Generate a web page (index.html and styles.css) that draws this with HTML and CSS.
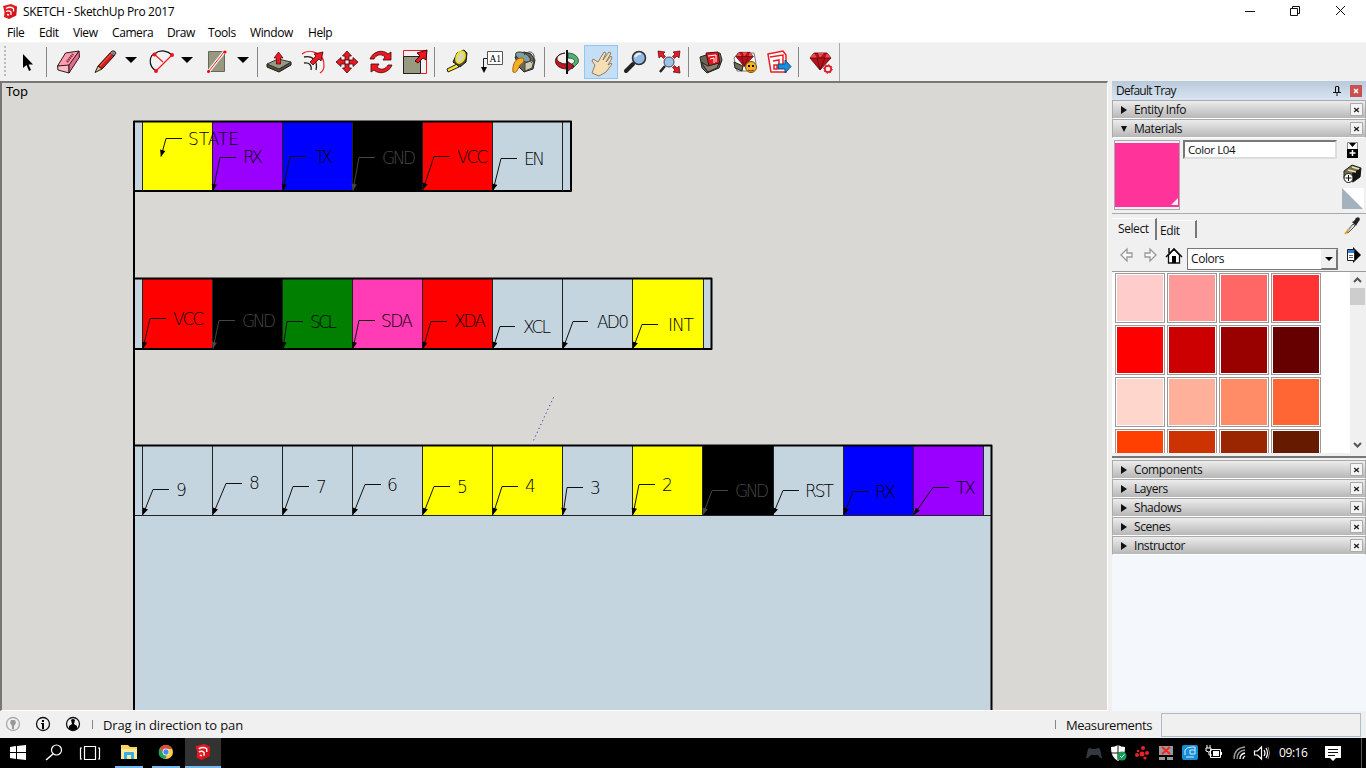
FILE: index.html
```html
<!DOCTYPE html>
<html lang="en">
<head>
<meta charset="utf-8">
<title>SKETCH - SketchUp Pro 2017</title>
<link rel="stylesheet" href="styles.css">
</head>
<body>
<svg class="defs" width="0" height="0">
  <defs>
    <symbol id="logo" viewBox="0 0 14 15"><path fill="#e3191f" d="M0 2 8 0l6 2.500-.8 9L6 15l-5-2 .5-5z"/><path fill="#b80f16" d="m6 15 7.200-3.500.8-9L8.500 5z" opacity=".4"/><path fill="none" stroke="#fff" stroke-width="1.300" d="M3 4.500q4-2.500 7.500 0v3M3 7.500q3-1.500 5 .5v3M4 10.500l2 .5"/></symbol>
    <symbol id="close" viewBox="0 0 13 13"><path fill="#f4f4f4" stroke="#aaa" d="M.5.5h12v12H.5z"/><path stroke="#222" stroke-width="1.300" d="m4.200 5 4.600 4M8.800 5 4.200 9"/></symbol>
    <symbol id="ruby" viewBox="0 0 24 24"><path fill="#b5121b" stroke="#4c0508" stroke-width=".8" d="M1 9 5 4h13l4 5-11 12z"/><path fill="#ef4b50" d="m5 4 3 5H1zM9 4h6l-4 5zM18 4l4 5h-6z"/><path stroke="#61070b" stroke-width=".8" fill="none" d="M1 9h21M8 9l3 12 5-12"/></symbol>
    <marker id="tip" viewBox="0 0 10 8" refX="9.500" refY="4" markerWidth="8" markerHeight="5.500" markerUnits="userSpaceOnUse" orient="auto"><path class="head" d="m0 0 10 4-10 4z"/></marker>
    <marker id="tip-gray" viewBox="0 0 10 8" refX="9.500" refY="4" markerWidth="8" markerHeight="5.500" markerUnits="userSpaceOnUse" orient="auto"><path class="head-gray" d="m0 0 10 4-10 4z"/></marker>
  </defs>
</svg>
<div class="app">
  <header class="titlebar">
    <svg class="app-logo"><use href="#logo"/></svg>
    <span class="title">SKETCH - SketchUp Pro 2017</span>
    <svg class="window-controls" viewBox="0 0 110 22"><path fill="none" stroke="#111" d="M1 10.500h10M46.500 7.500h7v7h-7zM48.500 7V5.500h7v7H54M92 5l9 9m0-9-9 9"/></svg>
  </header>
  <nav class="menubar"><span>File</span><span>Edit</span><span>View</span><span>Camera</span><span>Draw</span><span>Tools</span><span>Window</span><span>Help</span></nav>
  <div class="toolbar">
    <div class="tools">
      <i class="grip"></i>
      <svg class="tool" viewBox="0 0 34 34"><path d="M13 9v14l3.500-3 2.500 6 2-1-2.500-5.500h4.500z"/></svg>
      <i class="sep tight"></i>
      <svg class="tool" viewBox="0 0 34 34"><g stroke="#2c1b1e" stroke-linejoin="round"><path fill="#ff9db3" d="m6.500 21 8-13L28 6 18 22z"/><path fill="#ffb9c8" d="M6.500 21 18 20v8l-11-3z"/><path fill="#e56b88" d="M18 20 28 6l.5 6L18 28z"/></g><path stroke="#7c3545" stroke-width="2.500" stroke-dasharray="1.500 .7" d="m16 17 6-8"/></svg>
      <svg class="tool gap-s" viewBox="0 0 34 34"><path fill="#d51b1b" stroke="#2b0c0c" d="m10 21 13-14 4 3-13 14z"/><path fill="#e0bd73" stroke="#222" d="m10 21 4 3-7 3.500z"/><path fill="#888" stroke="#333" d="m22 8 2-2q3-1 4 2l-2 3z"/><path stroke="#ff6760" d="M12 21 24 8"/></svg>
      <svg class="drop" viewBox="0 0 22 34"><path d="M3 12h12l-6 6z"/></svg>
      <svg class="tool" viewBox="0 0 34 34"><path fill="none" stroke="#111" stroke-width="1.200" d="M12 26C3 20 6 10 11 8.500 17 4 24 6 28 10"/><path fill="none" stroke="#ed1b24" stroke-width="1.200" d="m10 9 9 8m9-7L12 26"/><g fill="#f1121c"><circle cx="10.500" cy="9.500" r="2"/><circle cx="28" cy="10" r="2"/><circle cx="12" cy="26" r="2"/></g></svg>
      <svg class="drop" viewBox="0 0 22 34"><path d="M3 12h12l-6 6z"/></svg>
      <svg class="tool" viewBox="0 0 34 34"><path fill="#999982" stroke="#66665a" d="M8.500 6.500h16v20h-16z"/><path stroke="#fff" stroke-width="3" d="M9 26 24 7"/><path stroke="#ed1b24" d="M9 26 24 7"/><circle cx="8.500" cy="26.500" r="1.500" fill="red"/><circle cx="25" cy="7" r="1.500" fill="red"/></svg>
      <svg class="drop last" viewBox="0 0 22 34"><path d="M3 12h12l-6 6z"/></svg>
      <i class="sep tight"></i>
      <svg class="tool" viewBox="0 0 34 34"><path fill="#53533f" stroke="#181813" d="m5 19 13 5 11-7v3l-12 7-12-5z"/><path fill="#999982" stroke="#333" d="m5 19 11-5 13 3-12 7z"/><path fill="#f01820" stroke="#3c080a" stroke-width=".7" d="M14.500 19v-6H12l4.500-6 4.500 6h-2.500v6z"/></svg>
      <svg class="tool" viewBox="0 0 34 34"><path fill="none" stroke="#f01820" stroke-width="1.200" d="M6 9c7-6 23-1 22 12 0 3-1 5-4 7"/><path fill="none" stroke="#222" stroke-width="1.300" d="M8 12c9-2 14 4 12 13M8 18c5-1 8 2 7 7"/><path fill="#f01820" stroke="#3c080a" stroke-width=".8" d="m14 17 6-6-2-2 9-2-2 9-2-2-6 6z"/></svg>
      <svg class="tool" viewBox="0 0 34 34"><g fill="#f01820" stroke="#3c080a" stroke-width=".8"><path d="m17 6 4.500 5H19v4h-4v-4h-2.500zM17 28l4.500-5H19v-4h-4v4h-2.500zM6 17l5-4.500V15h4v4h-4v2.500zM28 17l-5-4.500V15h-4v4h4v2.500z"/></g></svg>
      <svg class="tool" viewBox="0 0 34 34"><g fill="#f01820" stroke="#3c080a" stroke-width=".8"><path d="M6 14c3-8 13-10 18-5l3-2v8h-8l2-3c-4-4-9-2-11 2z"/><path d="M28 20c-3 8-13 10-18 5l-3 2v-8h8l-2 3c4 4 9 2 11-2z"/></g></svg>
      <svg class="tool" viewBox="0 0 34 34"><path fill="none" stroke="#f01820" d="M5.500 5.500h23v23h-23z"/><path fill="#999982" stroke="#222" d="M5.500 11.500h17v17h-17z"/><path fill="#f01820" stroke="#3c080a" d="m17 16 5-5-3-3 10-3-1 10-3-2-5 5z"/></svg>
      <i class="sep"></i>
      <svg class="tool" viewBox="0 0 34 34"><path fill="#f7e720" stroke="#222" d="m7 24 10-5 2 3-11 5z"/><path fill="#4b4b36" stroke="#181818" d="m13 17 4-9 7-3 3 3-1 9-6 5z"/><ellipse cx="20.500" cy="12" rx="4" ry="6" transform="rotate(25 20 12)" fill="#d7d7be" stroke="#f1db22" stroke-width="2"/></svg>
      <svg class="tool" viewBox="0 0 34 34"><path fill="#fff" stroke="#555" d="M13.500 6.500h15v13h-15z"/><path fill="none" stroke="#222" d="M13 13.500H9.500V23"/><path d="M7 22h6l-3 6z"/><text class="icon-label" x="15.500" y="16.500">A1</text></svg>
      <svg class="tool nudge" viewBox="0 0 34 34"><path fill="#686856" stroke="#252520" d="m8 12 9-5 7 2 4 6-2 9-9 3-5-5z"/><ellipse cx="16" cy="12" rx="8" ry="4" transform="rotate(25 16 12)" fill="#7fa0a5" stroke="#333"/><path fill="#cfcbb5" stroke="#484637" d="m18 18 9-3-2 8-7 3z"/><path fill="#faae28" stroke="#9e6510" d="M16 13C9 12 5 19 6 27c4 2 5-4 7-7 3-2 5-4 3-7z"/><path fill="none" stroke="#444" d="M17 10c8-8 14 2 7 8"/></svg>
      <i class="sep"></i>
      <svg class="tool" viewBox="0 0 34 34"><path fill="#55ae72" stroke="#164928" stroke-width=".8" d="M18 8c7 0 12 5 10 10l-6 6-4-3 4-2c5-3 2-6-4-6z"/><path fill="#bc1724" stroke="#3c080a" stroke-width=".8" d="M15 8c-8 1-10 6-6 9q3 2 8 2v-3l7 5-7 6v-3C3 24 1 10 15 8z"/><path stroke="#111" stroke-width="2" d="M17 5v24"/></svg>
      <svg class="tool active" viewBox="0 0 34 34"><path fill="#f6deb4" stroke="#75674e" stroke-width=".8" d="m8 28 3-8-3-4 1-2 5 3 6-10 2 1-3 7 6-8 2 1-5 9 5-6 1 2-4 7 3-2 1 1-6 8-7 4z"/></svg>
      <svg class="tool" viewBox="0 0 34 34"><path stroke="#222" stroke-width="4" stroke-linecap="round" d="m8 26 7-7"/><circle cx="21" cy="13" r="6.500" fill="#93b9e5" stroke="#333" stroke-width="1.600"/><path fill="none" stroke="#e4f2ff" stroke-width="2" d="M17 12q2-4 6-3"/></svg>
      <svg class="tool" viewBox="0 0 34 34"><path stroke="#222" stroke-width="2.500" d="m8 27 5-6"/><circle cx="17" cy="17" r="5" fill="#9bc4e9" stroke="#445"/><g fill="#f01820" stroke="#3c080a" stroke-width=".7"><path d="m6 6 7 1-2 2 2.500 2.500-2 2L9 11l-2 2zM28 6l-7 1 2 2-2.500 2.500 2 2L25 11l2 2zM28 28l-7-1 2-2-2.500-2.500 2-2L25 23l2-2z"/></g></svg>
      <i class="sep"></i>
      <svg class="tool" viewBox="0 0 34 34"><path fill="#6b6656" stroke="#26231e" d="m6 12 6-2 14-2 2 7-3 8-12 5-5-5z"/><path fill="#e21820" stroke="#470c0e" d="m12 8 12-1 2 12-11 2z"/><path fill="none" stroke="#fff" d="m14 11 8-1v7M16 14l4-1v5"/><path fill="#89816d" stroke="#222" d="m7 17 7 4 11-3-2 5-9 4z"/></svg>
      <svg class="tool" viewBox="0 0 34 34"><path fill="#fff" stroke="#777" d="m6 13 4-5h16l2 10-5 8H9z"/><use href="#ruby" x="7" y="4" width="20" height="20"/><path fill="#736b57" stroke="#222" d="m6 17 9 4-1 5-7-3z"/><circle cx="23" cy="22" r="5.500" fill="#f6b323" stroke="#754c0c"/><path d="M20 20h2v2h-2zM24 20h2v2h-2z"/><path stroke="#7a3e00" fill="none" d="M20 25q3 2 6 0"/></svg>
      <svg class="tool" viewBox="0 0 34 34"><path fill="#fff" stroke="#ed1b24" stroke-width="1.500" d="m6 9 15-3 3 4v17H9z"/><path fill="none" stroke="#ed1b24" stroke-width="1.500" d="m8 12 13-2v12M11 16l6-1v9M12 20h3v4h-3z"/><path fill="#178de0" stroke="#174977" d="M16 19h7v-4l6 6.500-6 6.500v-4h-7z"/></svg>
      <i class="sep"></i>
      <svg class="tool" viewBox="0 0 34 34"><use href="#ruby" x="5" y="4" width="24" height="24"/><circle cx="24" cy="24" r="3.200" fill="#eee" stroke="#e01a25" stroke-width="1.700"/><circle cx="24" cy="24" r="4.300" fill="none" stroke="#e01a25" stroke-dasharray="1.500 1.800"/></svg>
    </div>
  </div>
  <main class="workspace">
    <svg class="viewport" viewBox="2 83 1105 627">
      <text class="view-name" x="6" y="96" textLength="22">Top</text>
      <g class="face"><path d="M134 121h437v70H134zM134 278h577v71H134zM134 445h857v270H134z"/></g>
      <g>
        <path fill="#ff0" d="M142 122h70v69h-70zM633 279h70v70h-70zM423 446h140v69H423zM633 446h70v69h-70z"/>
        <path fill="#90f" d="M212 122h70v69h-70zM913 446h70v69h-70z"/>
        <path fill="#00f" d="M282 122h70v69h-70zM843 446h70v69h-70z"/>
        <path fill="red" d="M423 122h70v69h-70zM142 279h70v70h-70zM423 279h70v70h-70z"/>
        <path fill="#007f00" d="M282 279h70v70h-70z"/><path fill="#ff3bb5" d="M352 279h71v70h-71z"/>
        <path d="M352 122h71v69h-71zM212 279h71v70h-71zM703 446h70v69h-70z"/>
      </g>
      <path class="edge" d="M142.500 121v70M212.500 121v70M282.500 121v70M352.500 121v70M422.500 121v70M492.500 121v70M562.500 121v70M142.500 278v70M212.500 278v70M282.500 278v70M352.500 278v70M422.500 278v70M492.500 278v70M562.500 278v70M632.500 278v70M703.500 278v70M142.500 445v70M212.500 445v70M282.500 445v70M352.500 445v70M422.500 445v70M492.500 445v70M562.500 445v70M632.500 445v70M702.500 445v70M773.500 445v70M843.500 445v70M913.500 445v70M983.500 445v70M134 515.500h857"/>
      <path class="outline" d="M134 715V121.500h437V191H134M134 278.500h577.500V349H134M134 445.500h857.500V715"/>
      <path class="guide" d="m553.500 397.500-21 45"/>
      <g class="leader">
        <path d="M182 138.500h-16l-5 18"/><path d="M236 157.500h-16l-7 33"/><path d="M306 156.500h-16l-7 34"/><path d="M450 156.500h-16l-11 33"/><path d="M517 158.500h-16l-8 32"/>
        <path d="M166 318.500h-16l-7 30"/><path d="M303 321.500h-16l-4 27"/><path d="M375 320.500h-16l-6 28"/><path d="M447 321.500h-16l-8 27"/><path d="M515 326.500h-15l-7 22"/><path d="M588 321.500h-15l-10 27"/><path d="M658 324.500h-16l-9 24"/>
        <path d="M169 489.500h-16l-10 25"/><path d="M242 483.500h-16l-13 31"/><path d="M309 486.500h-16l-10 28"/><path d="M381 484.500h-16l-12 30"/><path d="M450 486.500h-16l-11 28"/><path d="M518 486.500h-16l-9 28"/><path d="M583 487.500h-16l-4 27"/><path d="M655 484.500h-16l-6 30"/><path d="M799 490.500h-16l-10 24"/><path d="M869 491.500h-16l-9 23"/><path d="M949 487.500h-16l-19 27"/>
      </g>
      <g class="leader muted"><path d="M375 157.500h-16l-6 33"/><path d="M235 320.500h-16l-6 28"/><path d="M728 490.500h-16l-9 24"/></g>
      <g class="tag">
        <text x="188" y="145" textLength="51">STATE</text><text x="243" y="163" textLength="20">RX</text><text x="315" y="163" textLength="18">TX</text><text class="dim" x="382" y="164" textLength="34">GND</text><text x="457" y="163" textLength="31">VCC</text><text x="524" y="165" textLength="21">EN</text>
        <text x="173" y="325" textLength="31">VCC</text><text class="dim" x="242" y="327" textLength="34">GND</text><text x="310" y="328" textLength="27">SCL</text><text x="381" y="327" textLength="32">SDA</text><text x="454" y="327" textLength="32">XDA</text><text x="523" y="333" textLength="28">XCL</text><text x="597" y="328" textLength="32">AD0</text><text x="668" y="331" textLength="26">INT</text>
        <text x="176" y="496">9</text><text x="249" y="489">8</text><text x="316" y="493">7</text><text x="387" y="491">6</text><text x="457" y="493">5</text><text x="525" y="492">4</text><text x="590" y="494">3</text><text x="662" y="491">2</text><text class="dim" x="735" y="497" textLength="34">GND</text><text x="805" y="497" textLength="29">RST</text><text x="875" y="498" textLength="21">RX</text><text x="956" y="494" textLength="20">TX</text>
      </g>
    </svg>
    <aside class="tray">
      <div class="tray-title"><span>Default Tray</span><svg class="pin" viewBox="0 0 8 10"><path fill="none" stroke="#111" d="M2.500 1v5m0-5.500h3V6M0 6.500h8M4 7v3M5.800 1v5"/></svg><svg class="tray-close" viewBox="0 0 12 12"><path fill="#c9504e" d="M0 0h12v12H0z"/><path stroke="#fff" stroke-width="1.500" d="m4 4 4 4m0-4L4 8"/></svg></div>
      <div class="panel-head"><i class="right"></i><span>Entity Info</span><svg><use href="#close"/></svg></div>
      <div class="panel-head"><i class="down"></i><span>Materials</span><svg><use href="#close"/></svg></div>
      <section class="materials">
        <div class="current">
          <div class="preview"><div class="chip"><i></i></div></div>
          <div class="name">Color L04</div>
          <svg class="side-icons" viewBox="0 0 24 72"><path fill="#fff" stroke="#888" d="M7.500 2.500h10v7h-10z"/><path d="M9 3h7l-3.500 4zM7 9h11v9H7z"/><path stroke="#fff" stroke-width="1.500" d="M12.500 10v6M9.500 13h6"/><path stroke="#222" fill="#756f4f" d="m4 31 8-6 9 3-1 9-7 5-9-4z"/><path fill="#151510" d="m12 33 9-5-1 9-7 5z"/><path stroke="#ece2b2" stroke-width="1.500" d="m8 30 8 2m-4-5 7 2"/><circle cx="8.500" cy="38" r="4.500" fill="#fff" stroke="#111"/><path stroke="#111" d="M8.500 35v6M5.500 38h6"/><path fill="#fff" d="M2 48h22v22z"/><path fill="#a3b2bd" d="m2 48 21 21H2z"/></svg>
        </div>
        <div class="tabs"><b>Select</b><b class="back">Edit</b><svg viewBox="0 0 18 18"><path fill="#222" d="m8 5 2-1 2-3c3-2 5 1 3 3l-2 3-1 2z"/><path fill="#ddd" stroke="#555" d="m9 7 2 2-6 6-2 1 1-3z"/><path stroke="#e1a21b" stroke-width="2" d="m5 12-4 5"/></svg></div>
        <div class="nav">
          <svg class="nav-icons" viewBox="0 0 72 30"><g fill="#f8f8f8" stroke="#999" stroke-width="1.300"><path d="m9 15 6-6v4h5v4h-5v4zM44 15l-6-6v4h-5v4h5v4z"/></g><path fill="#fff" stroke="#111" stroke-width="1.300" d="M56.500 15v8h11v-8L62 9z"/><path stroke="#111" fill="none" stroke-width="1.500" d="m54 17 8-8 8 8M57 13V8"/><path d="M60 16h4v7h-4z"/></svg>
          <div class="select"><span>Colors</span><button><i></i></button></div>
          <svg class="details" viewBox="0 0 16 18"><path d="M7 1v16l8-8z"/><path fill="#fff" stroke="#222" d="M1.500 3.500h7v11h-7z"/><path fill="#2e7fe0" d="M2 4h6v3H2z"/><path stroke="#666" d="M3 9.500h4m-4 2h4"/></svg>
        </div>
        <div class="library">
          <div class="colors">
            <i class="c1"></i><i class="c2"></i><i class="c3"></i><i class="c4"></i>
            <i class="c5"></i><i class="c6"></i><i class="c7"></i><i class="c8"></i>
            <i class="c9"></i><i class="c10"></i><i class="c11"></i><i class="c12"></i>
            <i class="c13"></i><i class="c14"></i><i class="c15"></i><i class="c16"></i>
          </div>
          <svg class="scrollbar" viewBox="0 0 16 181"><path fill="#f0f0f0" d="M0 0h16v181H0z"/><path fill="#cdcdcd" d="M0 16h15v17H0z"/><path fill="none" stroke="#555" stroke-width="2" d="m4 10 3.500-3.500L11 10M4 171l3.500 3.500L11 171"/></svg>
        </div>
      </section>
      <div class="panel-head"><i class="right"></i><span class="wide">Components</span><svg><use href="#close"/></svg></div>
      <div class="panel-head"><i class="right"></i><span>Layers</span><svg><use href="#close"/></svg></div>
      <div class="panel-head"><i class="right"></i><span>Shadows</span><svg><use href="#close"/></svg></div>
      <div class="panel-head"><i class="right"></i><span>Scenes</span><svg><use href="#close"/></svg></div>
      <div class="panel-head"><i class="right"></i><span>Instructor</span><svg><use href="#close"/></svg></div>
      <div class="tray-rest"></div>
    </aside>
  </main>
  <footer class="status">
    <svg class="status-icons" viewBox="0 0 96 27"><g fill="none" stroke-width="1.300"><circle cx="13" cy="13" r="6.500" stroke="#aaa"/><circle cx="43" cy="13" r="6.500" stroke="#111"/><circle cx="73" cy="13" r="6.500" stroke="#111"/></g><path fill="#999" d="M11 9h4l1 3-2 3v3h-2v-3l-2-3z"/><path d="M42 9h2v2h-2zM41 12h3v6h-2v-5h-1zM69 18v-3l3-2-1-4q2-2 4 0l-1 4 3 2v3q-4 3-8 0z"/><path stroke="#888" d="M92.500 9v9"/></svg>
    <span class="hint">Drag in direction to pan</span>
    <i class="tick"></i><span class="measure">Measurements</span><div class="field"></div>
  </footer>
  <div class="taskbar">
    <svg class="start" viewBox="0 0 115 30"><path fill="#fff" d="m10 9 6-1v6h-6zM17 8l9-1v7h-9zM10 15h6v6l-6-1zM17 15h9v7l-9-1z"/><g fill="none" stroke="#fff" stroke-width="1.200"><circle cx="56.500" cy="12" r="5"/><path stroke-width="1.600" d="m53 16-7 6"/><path d="M84.500 8.500h11v13h-11zM82 10h-1.500v11H82M98 10h1.500v11H98"/></g></svg>
    <div class="task files"><svg viewBox="0 0 18 16"><path fill="#ffd45d" d="M1 1h7l2 2h7v12H1z"/><path fill="#ffe99b" d="M1 5h16v10H1z"/><path fill="#39aee4" d="M4 9q0-1 1-1h8q1 0 1 1v6h-3v-4H7v4H4z"/></svg></div>
    <div class="task chrome"><svg viewBox="0 0 16 16"><circle cx="8" cy="8" r="7" fill="#ffcd41"/><path fill="#de4a3b" d="M2 4C5-.5 12 0 14 5H8L5 9z"/><path fill="#22a25a" d="m2 4 4 7 3 .5L7 15C0 14-.5 8 2 4z"/><circle cx="8" cy="8" r="3.400" fill="#fff"/><circle cx="8" cy="8" r="2.700" fill="#4b87ed"/></svg></div>
    <div class="task current-task"><svg viewBox="0 0 14 15"><use href="#logo"/></svg></div>
    <svg class="system" viewBox="1080 0 190 30"><path fill="#343940" d="m1086 20 2-9q2-2 4 0h4q2-2 4 0l2 9q-2 1-4-3h-7q-3 4-5 3z"/><path fill="#fff" d="M1111 9q4 0 7-2 3 2 7 2c0 7-2 11-7 14-5-3-7-7-7-14z"/><path stroke="#111" d="M1118 7v15m-7-7h14"/><circle cx="1122" cy="18" r="4.500" fill="#169b59"/><path fill="none" stroke="#fff" d="m1120 18 1.500 1.500 3-3"/><g fill="#e5222b"><circle cx="1142" cy="16" r="2.500"/><circle cx="1137" cy="17" r="2"/><circle cx="1138" cy="13" r="1.300"/><circle cx="1143" cy="10" r="2"/><circle cx="1147" cy="15" r="2"/><circle cx="1145" cy="20" r="1.600"/></g><path fill="#999" d="M1159 8h14v9h-14zM1159 19h6v3h-6zM1167 19h6v3h-6z"/><path stroke="#f22" stroke-width="2" d="m1162 9 8 7m0-7-8 7"/><rect x="1182" y="7" width="16" height="15" rx="2" fill="#168dd5"/><path fill="none" stroke="#d4efff" d="M1185 17v-5q2-3 7-3h3v7h-5v-4h5M1186 19h8"/><path fill="none" stroke="#fff" d="M1210.500 11.500h10v8h-10zM1207 7v3m3-3v3m-4 0h5v3q-2 2-5 0zM1209 14v3h3"/><path fill="#fff" d="M1213 13h6v5h-6zM1221 14h1v3h-1z"/><g fill="none" stroke="#999" stroke-width="1.300"><path d="M1234 21q0-11 11-12M1237 21q0-8 8-9"/><path stroke="#fff" d="M1240 21q0-5 5-6M1243 21q0-2 2-3"/></g><path fill="none" stroke="#fff" stroke-width="1.200" d="M1254.500 13h3l4-4v12l-4-4h-3zM1264 12q2 3 0 6m2-8q3 5 0 10"/><path fill="none" stroke="#888" d="M1268 9q3 6 0 12"/></svg>
    <span class="clock">09:16</span>
    <svg class="notice" viewBox="0 0 16 17"><path fill="#fff" d="M0 1h16v12h-5l-3 3-3-3H0z"/><path stroke="#111" d="M3 4.500h10M3 7.500h10M3 10.500h7"/></svg>
    <i class="desktop-edge"></i>
  </div>
</div>
</body>
</html>
```
FILE: styles.css
```css
* { box-sizing: border-box; }
body { margin: 0; background: #f0f0f0; font: 12px/16px "Open Sans", sans-serif; color: #111; letter-spacing: -.42px; overflow: hidden; }
svg { display: block; flex: none; }
.defs { position: absolute; }
.app { width: 1366px; height: 768px; display: flex; flex-direction: column; }
.titlebar { height: 23px; background: #fff; display: flex; align-items: center; padding: 0 12px 0 3px; }
.app-logo { width: 14px; height: 15px; margin-right: 6px; }
.title { flex: 1; letter-spacing: -.33px; color: #000; }
.window-controls { width: 110px; height: 22px; }
.menubar { height: 19px; background: #fff; display: grid; grid-template-columns: 32px 34px 39px 55px 41px 42px 58px 60px; padding-left: 7px; line-height: 20px; color: #000; }
.toolbar { height: 39px; border-top: 1px solid #f5f5f5; }
.tools { width: 840px; height: 38px; display: flex; align-items: center; border-right: 1px solid #aaa; background: #f1f1f1; }
.grip { width: 2px; height: 32px; margin: 0 4px; background: repeating-linear-gradient(#bbb 0 2px, #f1f1f1 2px 4px); }
.tool { width: 34px; height: 34px; flex: none; }
.active { background: #c3def5; box-shadow: inset 0 0 0 1px #90c6f0; }
.gap-s { margin-left: 3px; }
.nudge { margin: 0 1px 0 -1px; }
.drop { width: 22px; height: 34px; }
.last { margin-right: -1px; }
.sep { width: 1px; height: 30px; margin: 0 5px 0 2px; background: #888; flex: none; }
.tight { margin-right: 4px; }
.icon-label { font: 9.500px "Liberation Serif", serif; letter-spacing: 0; }
.workspace { height: 630px; display: flex; gap: 4px; }
.viewport { width: 1108px; height: 630px; background: #d9d8d4; border: solid #777; border-width: 2px 0 0 2px; border-right: 1px solid #fff; border-bottom: 1px solid #fff; }
.view-name { font: 13px "Noto Sans", sans-serif; letter-spacing: 0; }
.face { fill: #c5d5e0; }
.edge { fill: none; stroke: #222; }
.outline { fill: none; stroke: #000; stroke-width: 2; stroke-linejoin: round; }
.guide { stroke: #1515a5; stroke-dasharray: 1 3.200; }
.leader path { fill: none; stroke: #111; marker-end: url(#tip); }
.leader.muted path { stroke: #444; marker-end: url(#tip-gray); }
.head { fill: #000; }
.head-gray { fill: #444; }
.tag { font: 200 17px "DejaVu Sans Light", "DejaVu Sans", sans-serif; letter-spacing: 0; }
.dim { fill: #484848; }
.tray { width: 254px; display: flex; flex-direction: column; }
.tray-title { height: 19px; display: flex; align-items: center; padding: 0 4px; background: linear-gradient(#b9c9da, #d9e5f2); letter-spacing: -.7px; }
.pin { width: 8px; height: 10px; margin-left: auto; }
.tray-close { width: 12px; height: 12px; margin-left: 9px; }
.panel-head { height: 19px; border: 1px solid #aaa; border-bottom-color: #fff; background: linear-gradient(#ececec, #b7b7b7); display: flex; align-items: center; padding: 0 2px 0 8px; flex: none; }
.panel-head svg { width: 13px; height: 13px; margin-left: auto; }
.panel-head span { margin-left: 7px; }
.panel-head .wide { letter-spacing: -.35px; }
.right { border-left: 6px solid #111; border-top: 4px solid transparent; border-bottom: 4px solid transparent; }
.down { border-top: 6px solid #111; border-left: 3px solid transparent; border-right: 3px solid transparent; }
.materials { height: 320px; display: flex; flex-direction: column; border-bottom: 2px solid #777; margin-bottom: 2px; flex: none; }
.current { height: 76px; border-bottom: 1px solid #aaa; padding: 2px 2px 0 2px; display: flex; }
.preview { width: 66px; height: 70px; border: 1px solid #aaa; padding: 2px 0; }
.chip { height: 64px; background: #ff3399; padding: 55px 0 0 56px; }
.chip i { display: block; border-left: 7px solid transparent; border-bottom: 7px solid #eee; width: 0; }
.name { width: 154px; height: 19px; margin-left: 3px; background: #fff; border: 2px solid; border-color: #777 #ddd #ddd #777; padding-left: 3px; font-size: 11.500px; }
.side-icons { width: 24px; height: 72px; margin-left: auto; }
.tabs { height: 26px; display: flex; padding-top: 4px; }
.tabs b { font-weight: 400; border-top: 1px solid #fff; border-right: 2px solid #777; width: 45px; padding-left: 6px; line-height: 20px; }
.tabs .back { width: 40px; height: 18px; margin-top: 2px; padding-left: 3px; line-height: 19px; }
.tabs svg { width: 18px; height: 18px; margin: -1px 4px 0 auto; }
.nav { height: 32px; display: flex; border-bottom: 1px solid #999; }
.nav-icons { width: 72px; height: 30px; }
.select { width: 151px; height: 22px; margin: 8px 0 0 3px; background: #fff; border: 1px solid #777; padding-left: 3px; line-height: 20px; display: flex; justify-content: space-between; }
.select button { width: 16px; background: #f0f0f0; border: 1px solid; border-color: #eee #777 #777 #eee; padding: 0; display: grid; place-items: center; }
.select button i { border-top: 4px solid #000; border-left: 4px solid transparent; border-right: 4px solid transparent; }
.details { width: 16px; height: 18px; margin: 6px 0 0 8px; }
.library { height: 181px; display: flex; justify-content: space-between; background: #fff; overflow: hidden; }
.colors { display: grid; grid-template-columns: repeat(4, 50px); grid-auto-rows: 50px; gap: 2px; padding: 1px 0 0 3px; }
.colors i { border: 1px solid #999; box-shadow: inset 0 0 0 1px #fff; }
.scrollbar { width: 16px; height: 181px; }
.c1 { background: #fcc; } .c2 { background: #f99; } .c3 { background: #f66; } .c4 { background: #f33; }
.c5 { background: #f00; } .c6 { background: #c00; } .c7 { background: #900; } .c8 { background: #600; }
.c9 { background: #ffd6cc; } .c10 { background: #ffb09b; } .c11 { background: #ff8c66; } .c12 { background: #f63; }
.c13 { background: #ff4000; } .c14 { background: #c30; } .c15 { background: #992600; } .c16 { background: #661a00; }
.tray-rest { background: #f4f7fc; flex: 1; }
.status { height: 27px; display: flex; align-items: center; padding-right: 5px; font-size: 13px; }
.status-icons { width: 96px; height: 27px; }
.hint { margin-left: 7px; letter-spacing: -.13px; }
.tick { width: 1px; height: 9px; background: #888; margin-left: auto; }
.measure { margin: 0 9px 0 10px; letter-spacing: -.42px; }
.field { width: 200px; height: 24px; border: 1px solid #abbcd0; }
.taskbar { height: 30px; background: #000; display: flex; align-items: center; color: #fff; }
.start { width: 115px; height: 30px; }
.task { width: 28px; height: 30px; border-bottom: 2px solid #76b9ed; display: grid; place-items: center; margin-right: 9px; }
.task svg { width: 16px; height: 16px; }
.files svg { width: 18px; }
.current-task { width: 36px; background: #333; margin: 0; margin-left: -4px; }
.system { width: 190px; height: 30px; margin-left: auto; }
.clock { width: 45px; padding-left: 9px; }
.notice { width: 16px; height: 17px; margin-left: 10px; }
.desktop-edge { width: 1px; height: 30px; background: #555; margin: 0 4px 0 20px; }
```
